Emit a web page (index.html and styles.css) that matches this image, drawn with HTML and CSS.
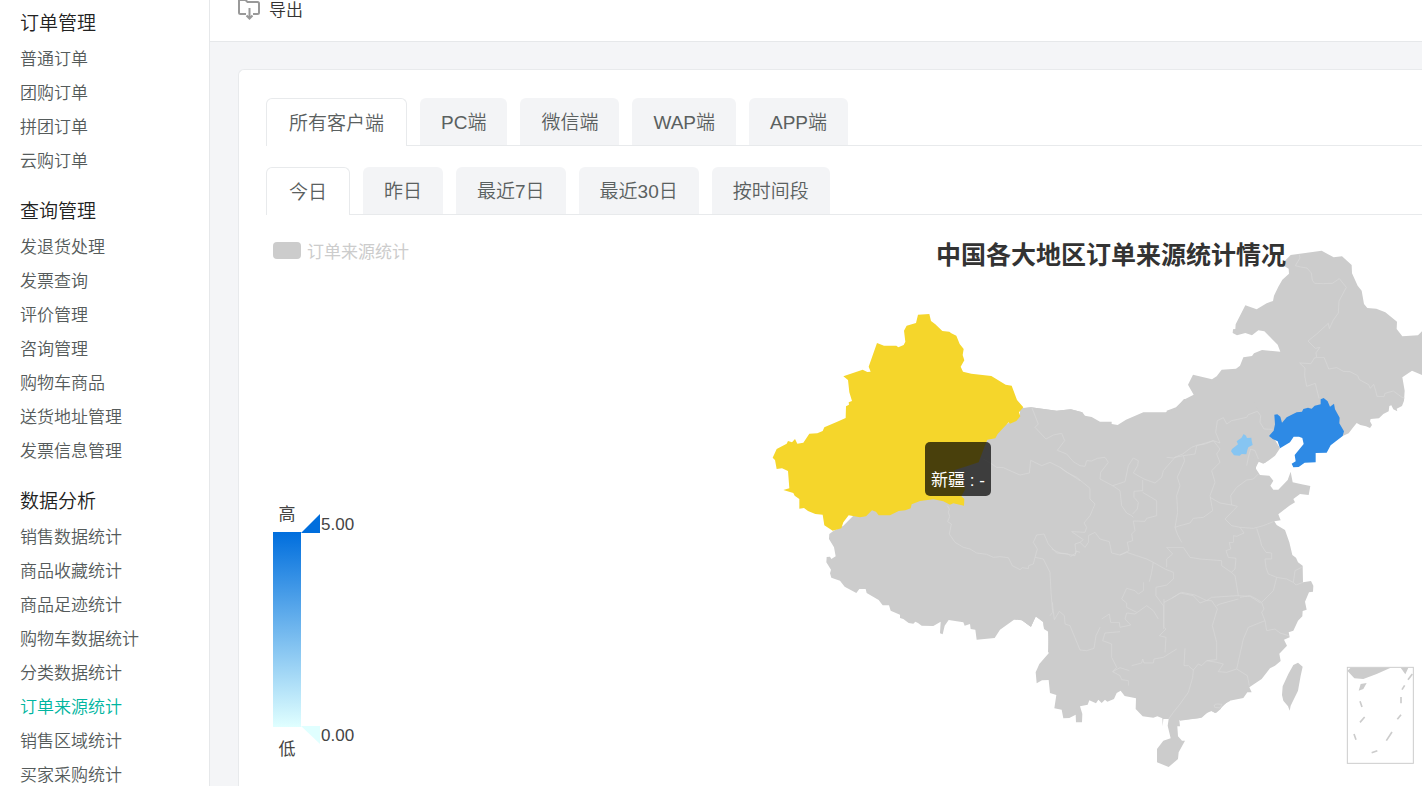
FILE: index.html
```html
<!DOCTYPE html>
<html lang="zh-CN">
<head>
  <meta charset="UTF-8">
  <meta name="viewport" content="width=device-width, initial-scale=1.0">
  <title>订单来源统计</title>
  <link rel="stylesheet" href="styles.css">
</head>
<body>

<nav class="sidebar">
  <h3>订单管理</h3>
  <ul>
    <li><a href="#">普通订单</a></li>
    <li><a href="#">团购订单</a></li>
    <li><a href="#">拼团订单</a></li>
    <li><a href="#">云购订单</a></li>
  </ul>
  <h3>查询管理</h3>
  <ul>
    <li><a href="#">发退货处理</a></li>
    <li><a href="#">发票查询</a></li>
    <li><a href="#">评价管理</a></li>
    <li><a href="#">咨询管理</a></li>
    <li><a href="#">购物车商品</a></li>
    <li><a href="#">送货地址管理</a></li>
    <li><a href="#">发票信息管理</a></li>
  </ul>
  <h3>数据分析</h3>
  <ul>
    <li><a href="#">销售数据统计</a></li>
    <li><a href="#">商品收藏统计</a></li>
    <li><a href="#">商品足迹统计</a></li>
    <li><a href="#">购物车数据统计</a></li>
    <li><a href="#">分类数据统计</a></li>
    <li><a href="#" class="active">订单来源统计</a></li>
    <li><a href="#">销售区域统计</a></li>
    <li><a href="#">买家采购统计</a></li>
  </ul>
</nav>

<main class="content">
  <header class="toolbar">
    <button class="export-btn" type="button">
      <svg width="22" height="22" viewBox="0 0 22 22" fill="none" stroke="#999" stroke-width="2">
        <path d="M8 16H2.500Q1 16 1 14.500V2H7.500L9.500 4H19.500Q21 4 21 5.500V14.500Q21 16 19.500 16H15"/>
        <path d="M11.500 10V20M8.500 17.500L11.500 20.500L14.500 17.500"/>
      </svg>
      <span>导出</span>
    </button>
  </header>

  <section class="card">
    <div class="tabs">
      <button type="button" class="tab active">所有客户端</button>
      <button type="button" class="tab">PC端</button>
      <button type="button" class="tab">微信端</button>
      <button type="button" class="tab">WAP端</button>
      <button type="button" class="tab">APP端</button>
    </div>
    <div class="tabs">
      <button type="button" class="tab active">今日</button>
      <button type="button" class="tab">昨日</button>
      <button type="button" class="tab">最近7日</button>
      <button type="button" class="tab">最近30日</button>
      <button type="button" class="tab">按时间段</button>
    </div>

    <div class="chart">
      <div class="chart-side">
        <button class="legend" type="button"><i></i>订单来源统计</button>
        <svg class="range" width="90" height="262" viewBox="0 0 90 262">
          <defs>
            <linearGradient id="rangeFill" x1="0" y1="0" x2="0" y2="1">
              <stop offset="0" stop-color="#006edd"/>
              <stop offset="1" stop-color="#e0ffff"/>
            </linearGradient>
          </defs>
          <text x="14" y="20" text-anchor="middle">高</text>
          <rect x="0" y="32" width="28" height="195" fill="url(#rangeFill)"/>
          <path d="M28 33L47 14V33Z" fill="#006edd"/>
          <path d="M28 226H47V244Z" fill="#e0ffff"/>
          <text x="48" y="30">5.00</text>
          <text x="48" y="241">0.00</text>
          <text x="14" y="255" text-anchor="middle">低</text>
        </svg>
      </div>

      <div class="map">
        <svg viewBox="2274 702 1992 1650">
          <!-- land -->
          <g class="land">
            <path transform="translate(3510 705)" d="M-10 530L18 520 40 498 71 482 54 452 69 422 126 436 140 427 155 407 198 404 210 395 220 370 246 366 252 358 276 348 331 353 323 332 283 292 265 289 246 304 226 297 201 304 188 297 189 286 196 285 197 271 226 214 260 226 290 208 309 201 312 185 325 158 337 137 357 119 356 104 337 92 345 80 362 63 455 50 491 70 516 67 545 93 546 118 563 155 575 170 582 210 592 222 619 224 646 235 681 263 680 285 697 307 744 304 756 292V423L726 410 697 430 704 470 702 500 696 516 680 524 682 532 670 526 664 514 658 516 656 532 640 540 627 553 602 555 600 562 606 573 600 582 588 577 571 573 560 567 548 582 536 598 518 606 420 570 310 610 330 643 315 665 295 680 280 689 262 682 258 700 258 760H-10Z"/>
            <path transform="translate(2460 1200)" d="M610 28L633 25 710 35 752 31 787 40V750H688L686 692 672 685 670 668 648 651 632 683 606 664 582 662 540 692 524 717 470 722 466 692 452 690 450 675 434 680 430 670 386 663 374 680 368 706 360 703 362 668 340 681 305 680 294 672 286 668 280 674 266 672 250 660 240 657 240 647 212 635 207 619 188 619 176 603 140 582 137 570 118 570 109 582 74 563 60 545 34 536 30 523 33 512 19 490 20 474 30 473 34 480 47 472 42 445 27 420 28 405 40 396 70 380 200 250 440 150 600 50Z"/>
            <path transform="translate(3060 1200)" d="M0 28L33 25 110 35 153 31 187 40 195 50 215 54 240 68 275 68 275 75 293 78 318 62 370 40H437L470 27 492 0H700L750 115 770 150 735 192 718 185 706 208V760H84L87 700 72 690 70 668 48 651 33 683 6 664 0 662Z"/>
            <path transform="translate(3060 1770)" d="M0 0V92L6 94 33 113 46 82 70 100 72 118 84 124 86 193 58 225 47 250 50 283 66 274 86 273 90 312 109 318 103 358 125 362 130 388 148 387 167 377 168 400H186L187 375 180 352 203 347 208 334 228 343 235 332 245 342 255 332 262 338 282 330 290 312 302 305 314 321 348 328 347 360 368 382 400 386 412 382 427 388 428 412 430 390H446L443 410 452 448 430 455 411 480V520L446 534 474 510 476 490 495 455H486L474 442 472 412H480L478 394 540 387 560 372 575 366 588 372 602 360 608 348 630 336V0Z"/>
            <path transform="translate(3480 1350)" d="M0 0H275L285 55 300 78 328 80 340 95 331 110 340 122H355L383 93 392 68 398 100 425 106 451 111 446 138 420 135 400 150 405 160 388 170 355 196 362 214 343 217 350 228 375 243 388 280 397 318 408 326 414 340 428 350 429 400 453 396 460 410 459 428 447 430 435 458 440 482 428 486 427 502 414 515 400 545 386 550 389 565 372 572 381 590 358 614 362 636 345 650 330 658 305 690 268 715 275 730 262 730 250 747 205 756 180 780 165 792 150 784 125 806 60 815V700H0Z"/>
            <path transform="translate(3480 1350)" d="M414 641L428 653 422 680 414 725 392 770 389 785 384 772 370 755 366 738 368 712 385 675 400 648Z"/>
          </g>

          <!-- province borders -->
          <g class="borders">
            <path transform="translate(3510 705)" d="M388 62L390 72 376 95 392 99 411 102 424 117 427 139 434 148 460 149 487 148 508 134 529 160 507 201 505 237 490 258 478 284 475 268 440 300 414 321 436 343 450 340 438 356 440 370 462 370 472 394 476 405 500 401 520 412 540 413 563 425 568 437 596 452 601 463 611 451 617 470 621 487 642 488 645 478 670 471 696 490 704 492M440 370L433 372 423 389 389 387 405 402 404 425 410 457 436 448 440 465 447 493M-10 670L10 672 38 660 65 640 80 634 105 630 130 620 150 627 137 595 142 560 160 551 170 570 185 560 230 550 235 542 262 532 272 545 270 565 282 585 308 586"/>
            <path transform="translate(2460 1200)" d="M382 320L388 330 385 340 389 352 383 368 394 375 388 405 405 430 430 445 450 450 470 462 500 466 520 475 540 473 565 476 577 500 600 512 607 506 625 509 626 500 640 495 645 475 670 480 690 520 693 580 698 640 690 650M645 475L652 450 640 430 650 408 672 405 685 435 710 462 740 465 765 470 768 456 780 460M490 180L508 190 530 205 550 206 570 215 600 228 628 222 632 184 665 200 690 190 720 205 745 222 780 245M636 27L655 75 645 85 678 120 700 108 725 103 734 125 712 154 740 165 760 188 780 200"/>
            <path transform="translate(3060 1200)" d="M180 200L195 202 200 185 215 186 232 178 255 175 265 190 242 220 240 240 278 260 315 248 325 200 340 177 355 185 353 200 340 222 372 240 405 252 425 235 430 215 465 175 490 170 494 185 472 235 480 260 470 290 473 340 465 385 472 405 485 430M368 243V275L342 277V295L355 310 352 330 338 345M278 260L300 275 305 320 320 342 335 350 340 355M368 280L410 305V350L380 358 375 367 340 366 345 395 335 405 338 425 322 430 327 455 300 468 275 462 268 428 240 420 225 400 205 410 205 430 195 445 180 430 165 435 168 462 152 472 145 465 120 462 95 450M180 430L190 422 155 398 195 400 200 385 192 372 210 350 225 315 210 300 210 268 170 235 140 220 120 205M300 468L320 460 350 470 380 480 400 490 395 520 388 548M370 550V575L355 585 345 575 320 568 305 600 320 612 320 625 350 640M400 490L435 510 460 520 460 540 440 558 408 565 408 590 430 620V690M490 170L525 165 530 140 580 125 600 150 590 165 600 190 575 215 585 250 570 290 578 335 550 355 520 358 510 372 480 380 465 385M570 295L600 312 635 318 632 290 650 265 680 243 700 240 715 225M680 200L685 175 692 150 705 155 715 180M635 318L652 322 615 360 635 380 660 385 700 388 730 380 760 368M660 385L672 402 650 412 640 410 640 430 628 430 632 450 618 455 625 475 648 478 645 510 634 520 605 500 605 485 580 483 540 480 510 475 490 445 440 445 458 465 440 480V505M634 520L645 530 655 590M455 598L485 580 525 588 560 605 575 595 650 590 690 592 722 612"/>
            <path transform="translate(3060 1770)" d="M97 40L103 92 118 67 133 80 135 105 150 110 180 183 200 185 222 178 228 140 240 115M245 90L268 75 272 100 298 100 300 115 332 108 315 90 320 72 345 75 380 50 400 65 415 90M300 128L255 132 248 155 275 165 275 205 290 235 278 248 300 236 328 245M335 230L365 222 368 210 372 222 400 222 402 210 430 205 470 180M432 30V115L438 120 418 140 438 145 435 190M432 40L455 28 480 12 520 20 540 42 558 35 575 35 592 60 577 110 590 160 590 212 560 215 545 230 535 225 520 243 505 230 492 230 495 178M520 243L518 265 505 310 480 345 460 370 446 390M278 248L300 260 305 272 325 275V290M592 345Q580 345 584 355L600 357 606 346Z"/>
            <path transform="translate(3480 1350)" d="M290 238L300 270 305 290 318 310 335 312 335 330 315 330 318 355 325 375 350 385 380 390 400 400 405 365 425 355M400 400L408 408 429 400M350 385L340 425 305 460 290 450 270 440 240 445M170 470L180 465 235 450M305 460L312 480 305 490 315 515 320 545 345 540 360 552 386 560M315 515L290 525 265 535 250 570 230 660M140 635L170 640 190 645 175 668 200 670 230 660 262 680 268 710"/>
          </g>

          <path class="xinjiang" transform="translate(2280 900)" d="M474 47L508 45 513 66 526 76 547 96 568 98 574 103 589 110 599 135 611 150 608 168 613 184 602 203 609 218 634 224 694 231 737 257 755 260 771 303 790 325 777 340 781 352 769 366 750 374 746 370 729 388 713 405 706 418 682 422 674 442 656 490 620 502 582 514 600 540 616 570 604 592 613 600 612 620 580 613 570 617 550 607 520 601 480 606 455 616 452 628 436 634 416 636 390 649 356 649 348 638 336 634 318 652 300 655 266 649 250 670 244 688 218 695 193 679 188 647 166 645 144 636 132 627 118 629 118 600 104 590 100 582 70 573 88 568 84 516 66 508 50 510 45 483 38 476 50 450 80 434 84 426 96 430 105 420 112 434 130 431 148 404 172 403 188 396 193 385 230 369 257 357 258 322 267 317 266 310 276 306 268 280 264 243 250 232 308 212 322 219 332 218 326 203 351 132 372 140 409 140 415 145 431 138 436 128 432 95 440 80 468 72Z"/>
          <path class="liaoning" transform="translate(3510 705)" d="M313 542L322 541 331 548 336 566 350 550 380 535 396 533 400 525 414 521 425 524 434 515 452 511 452 496 461 492 473 502 480 518 492 509 495 526 509 551 508 568 522 592 518 606 482 634 470 656 437 657V685L404 686 386 699 370 700 365 689 377 682 374 663 401 630 397 612 387 608H371L360 625 330 643 323 622 308 615 297 606 311 590 315 571Z"/>
          <path class="beijing" transform="translate(3510 705)" d="M221 600L228 605 231 612 244 611 245 620 248 633 235 640 232 648 229 661 215 660 209 665 192 664 183 652 186 645 204 631 200 622 208 616 214 612Z"/>

          <!-- south sea inset -->
          <g class="inset" transform="translate(3480 1350)">
            <rect x="562" y="655" width="198" height="288"/>
            <path class="isle" d="M562 665L572 656H692L650 675 610 690 583 688ZM722 656H745L736 676ZM602 705L620 702 610 720 596 725Z"/>
            <path class="dashes" d="M600 757L606 774M600 820L614 804M582 855L588 872M635 911L652 905M679 875L696 849M712 811L723 797M723 744V763M726 722L734 709M744 692L757 675"/>
          </g>
        </svg>
        <h2 class="map-title">中国各大地区订单来源统计情况</h2>
        <div class="tooltip"><br>新疆 : -</div>
      </div>
    </div>
  </section>
</main>

</body>
</html>
```
FILE: styles.css
```css
* {
  box-sizing: border-box;
}
body {
  margin: 0;
  display: flex;
  height: 100vh;
  overflow: hidden;
  font-family: "Liberation Sans", "Noto Sans CJK SC", sans-serif;
  font-weight: 350;
  background: #f4f5f7;
  color: #333;
}
button {
  font: inherit;
  color: inherit;
  border: none;
  background: none;
  padding: 0;
  cursor: pointer;
}

/* sidebar */
.sidebar {
  flex: 0 0 210px;
  padding: 5px 20px 0;
  background: #fff;
  border-right: 1px solid #e6e8ea;
  overflow: hidden;
}
.sidebar h3 {
  margin: 0;
  font-size: 19px;
  font-weight: 350;
  line-height: 38px;
  color: #222;
}
.sidebar ul {
  list-style: none;
  margin: 0 0 14px;
  padding: 0;
}
.sidebar a {
  display: block;
  font-size: 17px;
  line-height: 34px;
  color: #555b5b;
  text-decoration: none;
  white-space: nowrap;
}
.sidebar a.active {
  color: #00b5a0;
}

/* toolbar */
.content {
  flex: 1;
  min-width: 0;
  display: flex;
  flex-direction: column;
}
.toolbar {
  flex: 0 0 42px;
  padding-left: 28px;
  background: #fff;
  border-bottom: 1px solid #e6e8ea;
}
.export-btn {
  display: flex;
  align-items: center;
  gap: 9px;
  height: 17px;
  font-size: 17px;
}

/* card */
.card {
  flex: 1;
  min-height: 0;
  margin: 27px 0 0 28px;
  padding: 28px 0 0 27px;
  background: #fff;
  border: 1px solid #e8eaec;
  border-right: none;
  border-bottom: none;
  border-radius: 6px 0 0 0;
}
.tabs {
  display: flex;
  gap: 13px;
  height: 48px;
  margin-bottom: 21px;
  border-bottom: 1px solid #e8eaec;
}
.tabs + .tabs {
  margin-bottom: 18px;
}
.tab {
  height: 47px;
  padding: 0 21px 3px;
  font-size: 19px;
  color: #5a6060;
  background: #f3f4f6;
  border-radius: 6px 6px 0 0;
  white-space: nowrap;
}
.tab.active {
  height: 48px;
  padding: 0 22px 3px;
  background: #fff;
  border: 1px solid #e8eaec;
  border-bottom: none;
}

/* chart */
.chart {
  display: grid;
  grid-template-columns: 492px 1fr;
}
.chart-side {
  padding-left: 7px;
}
.legend {
  display: flex;
  align-items: center;
  gap: 6px;
  height: 34px;
  font-size: 17px;
  font-weight: 400;
  color: #ccc;
}
.legend i {
  width: 28px;
  height: 17px;
  border-radius: 4px;
  background: #ccc;
}
.range {
  display: block;
  margin-top: 233px;
  font-size: 17px;
  font-weight: 400;
  fill: #444;
}
.map {
  position: relative;
}
.map svg {
  display: block;
  width: 100%;
}
.map-title {
  position: absolute;
  top: 4px;
  left: 178px;
  margin: 0;
  font-size: 25px;
  line-height: 36px;
  font-weight: 700;
  white-space: nowrap;
}
.tooltip {
  position: absolute;
  top: 209px;
  left: 167px;
  padding: 3px 6px;
  font-size: 17px;
  line-height: 24px;
  font-weight: 400;
  color: #fff;
  background: rgba(0, 0, 0, 0.7);
  border-radius: 5px;
  white-space: nowrap;
}
.land {
  fill: #ccc;
}
.borders {
  fill: none;
  stroke: #dadada;
  stroke-width: 2;
}
.xinjiang {
  fill: #f5d62b;
}
.liaoning {
  fill: #2e8ae5;
}
.beijing {
  fill: #86c5f2;
}
.inset {
  fill: none;
  stroke: #ccc;
  stroke-width: 3;
}
.inset .isle {
  fill: #ccc;
  stroke: none;
}
.inset .dashes {
  stroke-width: 5;
}
```
